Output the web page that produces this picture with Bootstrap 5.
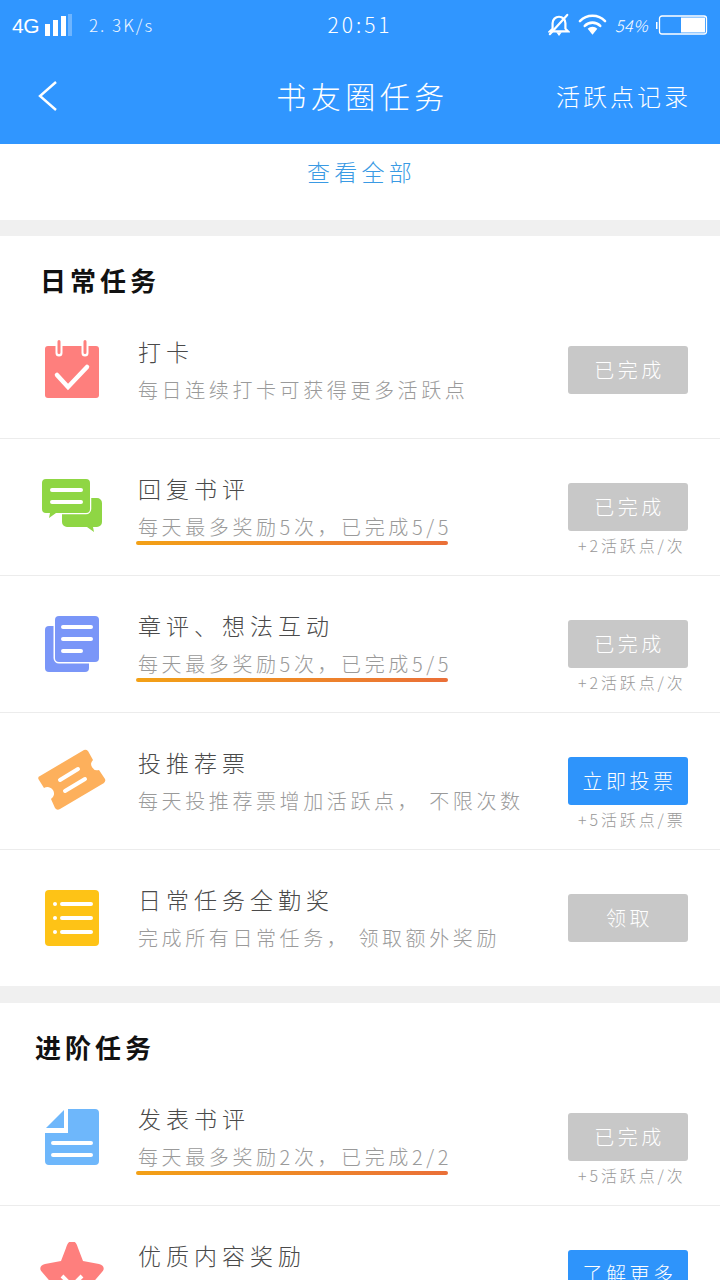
<!DOCTYPE html>
<html lang="zh-CN">
<head>
<meta charset="utf-8">
<title>书友圈任务</title>
<link rel="stylesheet" href="https://cdn.jsdelivr.net/npm/bootstrap@5.3.0/dist/css/bootstrap.min.css">
<style>
html,body{height:1280px;overflow:hidden}
body{background:#fff;font-family:"Noto Sans CJK SC","Liberation Sans",sans-serif;font-weight:300;color:#555}
.hero{background:#3096ff;color:#fff;height:144px}
.statusline{height:50px;padding:0 12px}
.statusline>div{flex:1 1 0}
.net{font:400 21px/1 "Liberation Sans",sans-serif;letter-spacing:-.5px}
.speed{font-size:17px;letter-spacing:2px;margin-left:16px;opacity:.92}
.clock{font-size:21px;letter-spacing:3px;text-align:center;flex:0 0 auto!important}
.pct{font-size:16px;letter-spacing:.5px;font-style:italic}
.navgrid{display:grid;grid-template-columns:1fr auto 1fr;height:94px;padding:0 30px 0 38px}
.backarrow{margin-top:-2px}
.pagetitle{font-size:30px;letter-spacing:4.5px;line-height:90px;margin-left:-3px}
.action{font-size:24px;letter-spacing:3px;line-height:92px;text-align:right;white-space:nowrap;margin-right:-1px}
.seeall{height:76px;color:#3a9ae4;font-size:23px;letter-spacing:4.2px;line-height:54px;text-align:center;padding-left:3px}
.gapbar{height:16px;background:#f0f0f0}
.gapbar2{height:17px}
.sectitle{height:66px;font-size:26px;font-weight:700;letter-spacing:4px;color:#111;line-height:88px;padding-left:40px}
.sectitle2{padding-left:35px}
.taskrow{height:137px;border-bottom:1px solid #ececec}
.taskend{height:136px;border-bottom:0}
.iconcol{width:136px;flex:0 0 136px;padding-top:36px;padding-left:36px}
.iconcol svg{display:block}
.maincol{flex:1 1 auto;padding-top:31px;min-width:0}
.tt{font-size:23px;letter-spacing:5px;line-height:36px;height:36px;padding-left:2px;color:#4a4a4a;white-space:nowrap}
.st{font-size:20px;letter-spacing:3.6px;line-height:29px;height:29px;padding-left:2px;color:#9a9a9a;white-space:pre;margin-top:6px}
.pbar{width:312px;height:4px;border-radius:2px;background:linear-gradient(90deg,#f3a116,#ea6f38)}
.sidecol{flex:0 0 120px;width:120px;margin-right:32px;padding-top:44px}
.tbtn{display:block;width:120px;height:48px;padding:0 0 0 3px;border:0;border-radius:3px;color:#fff;font-size:20px;font-weight:300;letter-spacing:3.5px;line-height:48px}
.tbtn.done,.tbtn.done:hover{background:#c8c8c8;color:#fff}
.tbtn.go,.tbtn.go:hover{background:#2e94fb;color:#fff}
.note{font-size:16px;letter-spacing:2.9px;color:#999;line-height:28px;white-space:nowrap;padding-left:10px}
</style>
</head>
<body>
<header class="hero">
  <div class="statusline d-flex align-items-center">
    <div class="d-flex align-items-center">
      <span class="net">4G</span>
      <svg class="ms-1" width="30" height="24" viewBox="0 0 30 24"><g fill="#fff"><rect x="2" y="11" width="5" height="12"/><rect x="10" y="7" width="5" height="16"/><rect x="18" y="3" width="5" height="20"/></g><rect x="25" y="1" width="4" height="22" fill="#fff" opacity=".3"/></svg>
      <span class="speed">2. 3K/s</span>
    </div>
    <div class="clock">20:51</div>
    <div class="d-flex align-items-center justify-content-end gap-2">
      <svg width="22" height="24" viewBox="0 0 24 24"><path d="M12 3a7 7 0 0 1 7 7v6l3 3H2l3-3v-6a7 7 0 0 1 7-7z" fill="none" stroke="#fff" stroke-width="2.4"/><path d="M9 20h6l-3 4z" fill="#fff"/><path d="M21 1 2 22" stroke="#fff" stroke-width="2.4" stroke-linecap="round"/></svg>
      <svg width="29" height="24" viewBox="0 0 30 24"><g fill="none" stroke="#fff" stroke-width="2.6" stroke-linecap="round"><path d="M2 8a18 18 0 0 1 26 0"/><path d="M7 13a11 11 0 0 1 16 0"/></g><path d="M10 16a7 7 0 0 1 10 0l-5 6z" fill="#fff"/></svg>
      <span class="pct">54%</span>
      <svg class="battery" width="52" height="20" viewBox="0 0 52 20"><rect x="0" y="7" width="1.500" height="7" fill="#fff"/><rect x="3.500" y="1" width="47" height="18" rx="2.500" fill="none" stroke="#fff" stroke-width="1.300"/><rect x="25" y="2.500" width="24" height="15" fill="#fff"/></svg>
    </div>
  </div>
  <div class="navgrid">
    <svg class="align-self-center backarrow" width="20" height="32" viewBox="0 0 20 32"><path d="M18 2 2 16l16 14" fill="none" stroke="#fff" stroke-width="2.400"/></svg>
    <div class="pagetitle">书友圈任务</div>
    <div class="action">活跃点记录</div>
  </div>
</header>
<div class="seeall">查看全部</div>
<div class="gapbar"></div>

<div class="sectitle">日常任务</div>

<section class="taskrow d-flex">
  <div class="iconcol"><svg width="72" height="64" viewBox="0 0 72 64"><path d="M12 8h48a3 3 0 0 1 3 3v46a3 3 0 0 1-3 3H12a3 3 0 0 1-3-3V11a3 3 0 0 1 3-3z" fill="#fe7f7d"/><g fill="none" stroke-linecap="round"><path d="M23 4v11M49 4v11" stroke="#fff" stroke-width="7"/><path d="M23 3.500v11M49 3.500v11" stroke="#fe7f7d" stroke-width="3"/><path d="M21 37l11 12 19-20" stroke="#fff" stroke-width="4.500"/></g></svg></div>
  <div class="maincol"><div class="tt">打卡</div><div class="st">每日连续打卡可获得更多活跃点</div></div>
  <div class="sidecol"><button type="button" class="btn tbtn done">已完成</button></div>
</section>

<section class="taskrow d-flex">
  <div class="iconcol"><svg width="72" height="64" viewBox="0 0 72 64"><path d="M31 23h30a5 5 0 0 1 5 5v19a5 5 0 0 1-5 5h-4l1 5-7-5H31a5 5 0 0 1-5-5V28a5 5 0 0 1 5-5z" fill="#8fd644"/><path d="M10 4h40a4 4 0 0 1 4 4v26a4 4 0 0 1-4 4H20l-7 5 1-5h-4a4 4 0 0 1-4-4V8a4 4 0 0 1 4-4z" fill="#8fd644" stroke="#fff" stroke-width="2.500" paint-order="stroke"/><path d="M16 15h29M16 27h29" stroke="#fff" stroke-width="4" stroke-linecap="round"/></svg></div>
  <div class="maincol"><div class="tt">回复书评</div><div class="st">每天最多奖励5次&#xFF0C;已完成5/5</div><div class="pbar"></div></div>
  <div class="sidecol"><button type="button" class="btn tbtn done">已完成</button><div class="note">+2活跃点/次</div></div>
</section>

<section class="taskrow d-flex">
  <div class="iconcol"><svg width="72" height="64" viewBox="0 0 72 64"><rect x="9" y="14" width="44" height="46" rx="4" fill="#7a96f8"/><rect x="19" y="4" width="44" height="46" rx="4" fill="#7a96f8" stroke="#fff" stroke-width="3" paint-order="stroke"/><path d="M27 15h28M27 27h28M27 39h18" stroke="#fff" stroke-width="4" stroke-linecap="round"/></svg></div>
  <div class="maincol"><div class="tt">章评、想法互动</div><div class="st">每天最多奖励5次&#xFF0C;已完成5/5</div><div class="pbar"></div></div>
  <div class="sidecol"><button type="button" class="btn tbtn done">已完成</button><div class="note">+2活跃点/次</div></div>
</section>

<section class="taskrow d-flex">
  <div class="iconcol"><svg width="72" height="64" viewBox="0 0 72 64"><path d="M4 27 48 1Q50 0 52 2L57 11A6 6 0 0 0 63 21L69 30Q70 32 68 34L24 60Q21 62 19 59L15 50A6 6 0 0 0 8 39L3 31Q1 28 4 27Z" fill="#fdb05c"/><path d="M24 31l18-11M29 42l20-12" stroke="#fff" stroke-width="4" stroke-linecap="round"/></svg></div>
  <div class="maincol"><div class="tt">投推荐票</div><div class="st">每天投推荐票增加活跃点&#xFF0C; 不限次数</div></div>
  <div class="sidecol"><button type="button" class="btn tbtn go">立即投票</button><div class="note">+5活跃点/票</div></div>
</section>

<section class="taskrow taskend d-flex">
  <div class="iconcol"><svg width="72" height="64" viewBox="0 0 72 64"><rect x="9" y="4" width="54" height="56" rx="4" fill="#fec316"/><g fill="#fff"><circle cx="19" cy="18" r="2"/><circle cx="19" cy="32" r="2"/><circle cx="19" cy="46" r="2"/></g><path d="M26 18h29M26 32h29M26 46h29" stroke="#fff" stroke-width="4" stroke-linecap="round"/></svg></div>
  <div class="maincol"><div class="tt">日常任务全勤奖</div><div class="st">完成所有日常任务&#xFF0C; 领取额外奖励</div></div>
  <div class="sidecol"><button type="button" class="btn tbtn done">领取</button></div>
</section>

<div class="gapbar gapbar2"></div>
<div class="sectitle sectitle2">进阶任务</div>

<section class="taskrow d-flex">
  <div class="iconcol"><svg width="72" height="64" viewBox="0 0 72 64"><path d="M32 4h27a4 4 0 0 1 4 4v48a4 4 0 0 1-4 4H13a4 4 0 0 1-4-4V28h23z" fill="#6eb7fb"/><path d="M28 5v18H10z" fill="#6eb7fb"/><path d="M17 38h38M17 50h38" stroke="#fff" stroke-width="4" stroke-linecap="round"/></svg></div>
  <div class="maincol"><div class="tt">发表书评</div><div class="st">每天最多奖励2次&#xFF0C;已完成2/2</div><div class="pbar"></div></div>
  <div class="sidecol"><button type="button" class="btn tbtn done">已完成</button><div class="note">+5活跃点/次</div></div>
</section>

<section class="taskrow d-flex border-0">
  <div class="iconcol"><svg width="72" height="72" viewBox="0 1 72 72"><path d="M36 0c3 0 5 3 6 7l5 13 16 3c5 1 6 5 3 8L54 45l4 20c1 4-2 6-6 4L36 60 20 69c-4 2-7 0-6-4l4-20L6 31c-3-3-2-7 3-8l16-3 5-13c1-4 3-7 6-7z" fill="#fe7f7d"/><path d="M26 35l10 10 10-10" fill="none" stroke="#fff" stroke-width="4"/></svg></div>
  <div class="maincol"><div class="tt">优质内容奖励</div></div>
  <div class="sidecol"><button type="button" class="btn tbtn go">了解更多</button></div>
</section>
<script src="https://cdn.jsdelivr.net/npm/bootstrap@5.3.0/dist/js/bootstrap.bundle.min.js"></script>
</body>
</html>
